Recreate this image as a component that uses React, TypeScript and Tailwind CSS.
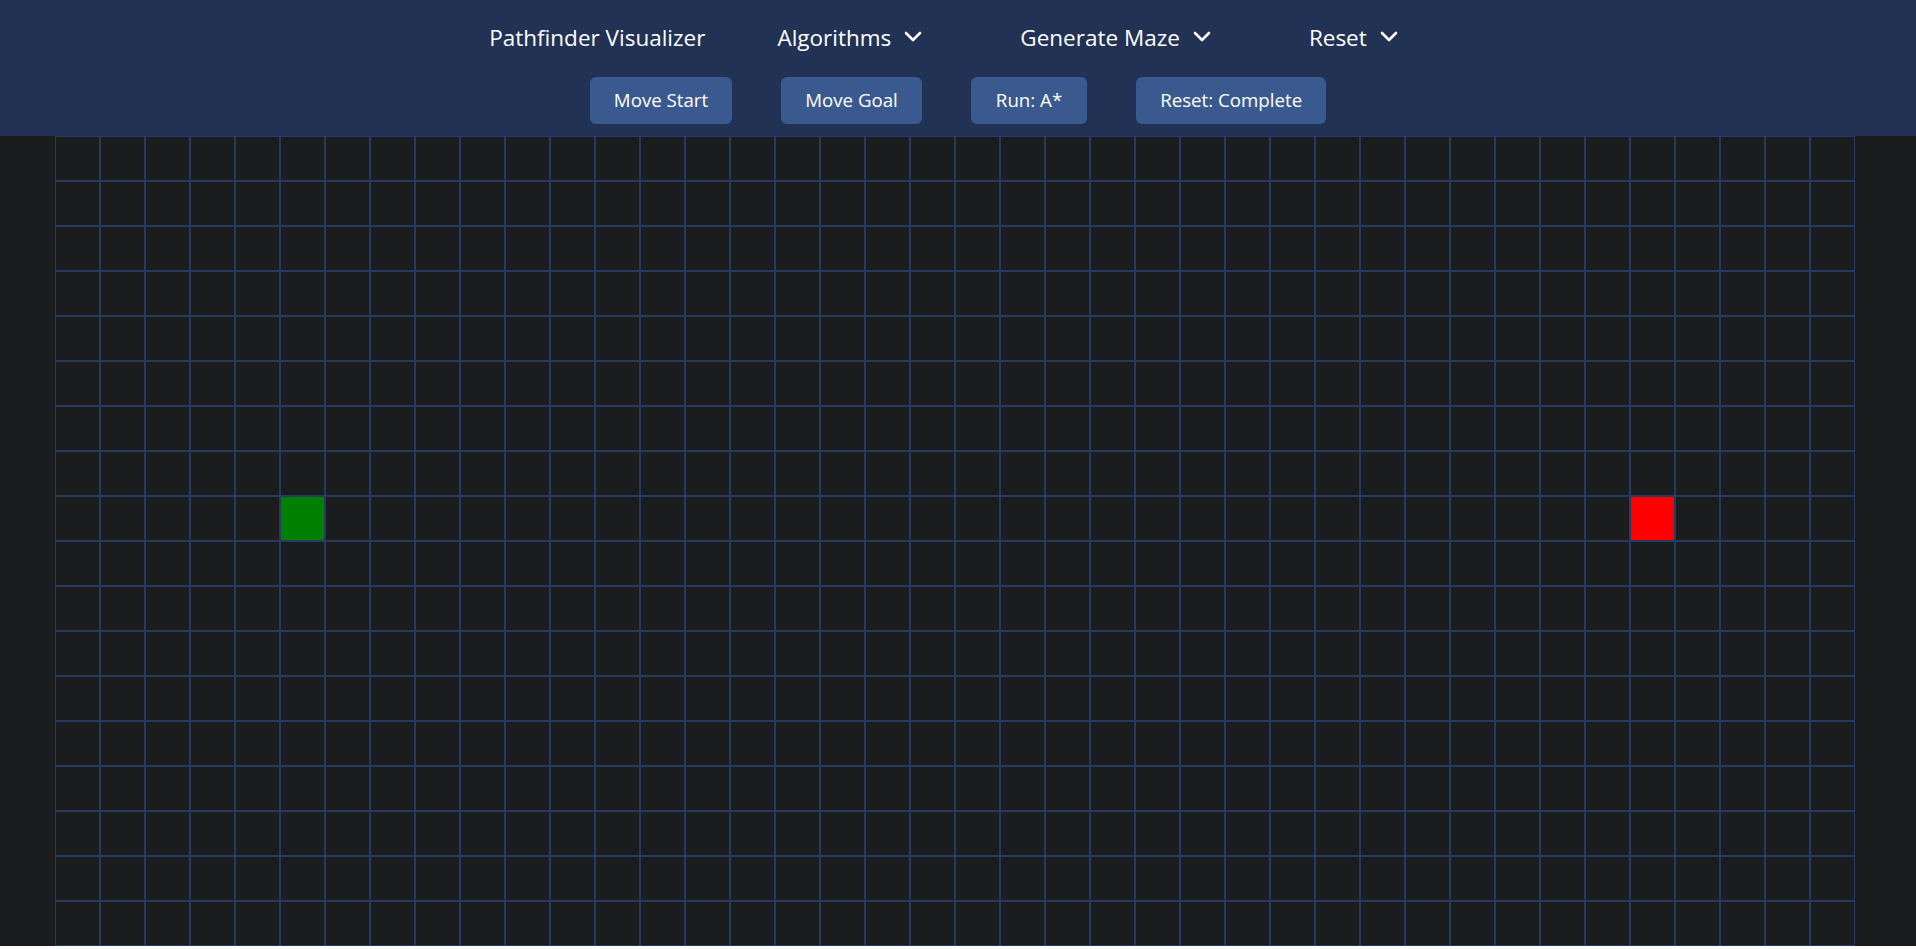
import React from 'react'

const ROWS = 18
const COLS = 40
const START = { row: 8, col: 5 }
const GOAL = { row: 8, col: 35 }

function Chevron() {
  return (
    <svg width="18" height="11" viewBox="0 0 18 11" fill="none" className="ml-[13px] mt-[-4px]">
      <polyline points="2,2 9,9 16,2" stroke="white" strokeWidth="2.6" strokeLinecap="round" strokeLinejoin="round" />
    </svg>
  )
}

export default function App() {
  const cells = []
  for (let r = 0; r < ROWS; r++) {
    for (let c = 0; c < COLS; c++) {
      const isStart = r === START.row && c === START.col
      const isGoal = r === GOAL.row && c === GOAL.col
      let bg = 'bg-[#1b1c1e]'
      if (isStart) bg = 'bg-[#008000]'
      if (isGoal) bg = 'bg-[#ff0000]'
      cells.push(<div key={`${r}-${c}`} className={`box-border h-[45px] w-[45px] border border-[#26395f] ${bg}`} />)
    }
  }

  return (
    <div className="min-h-screen bg-white" style={{ fontFamily: '"Open Sans", "Noto Sans", sans-serif' }}>
      {/* Top bar */}
      <div className="bg-[#213255] pt-[14px] pb-[12px] text-white">
        {/* Nav links */}
        <div className="flex h-[48px] items-center justify-center pr-[29px] text-[22.5px]">
          <span>Pathfinder Visualizer</span>
          <div className="ml-[72px] flex items-center">
            <span>Algorithms</span>
            <Chevron />
          </div>
          <div className="ml-[98px] flex items-center">
            <span>Generate Maze</span>
            <Chevron />
          </div>
          <div className="ml-[98px] flex items-center">
            <span>Reset</span>
            <Chevron />
          </div>
        </div>

        {/* Action buttons */}
        <div className="mt-[15px] flex justify-center gap-[49px] text-[18.7px]">
          <button className="h-[47px] rounded-md bg-[#3a5a8f] px-6 text-white">Move Start</button>
          <button className="h-[47px] rounded-md bg-[#3a5a8f] px-6 text-white">Move Goal</button>
          <button className="h-[47px] rounded-md bg-[#3a5a8f] px-[25px] text-white">Run: A*</button>
          <button className="h-[47px] rounded-md bg-[#3a5a8f] px-6 text-white">Reset: Complete</button>
        </div>
      </div>

      {/* Grid */}
      <div className="bg-[#1b1c1e] pl-[55px]">
        <div className="grid w-[1801px] grid-cols-[repeat(40,45px)]">{cells}</div>
      </div>
    </div>
  )
}
